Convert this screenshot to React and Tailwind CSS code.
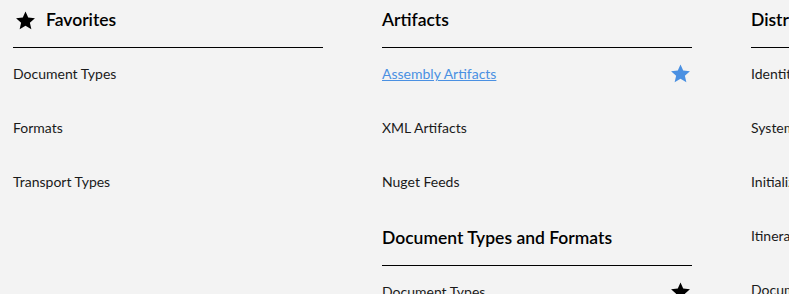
import React from "react";

const Star = ({ className }) => (
  <svg viewBox="0 0 24 24" className={className} fill="currentColor">
    <path d="M12 1.6l3.1 7.1 7.7.7-5.8 5.1 1.7 7.6L12 18.1l-6.7 4 1.7-7.6-5.8-5.1 7.7-.7z" />
  </svg>
);

const columns = [
  [
    {
      title: "Favorites",
      icon: true,
      items: [{ name: "Document Types" }, { name: "Formats" }, { name: "Transport Types" }],
    },
  ],
  [
    {
      title: "Artifacts",
      items: [
        { name: "Assembly Artifacts", link: true, star: "blue" },
        { name: "XML Artifacts" },
        { name: "Nuget Feeds" },
      ],
    },
    {
      title: "Document Types and Formats",
      items: [{ name: "Document Types", star: "black" }, { name: "Formats" }],
    },
  ],
  [
    {
      title: "Distribution",
      items: [
        { name: "Identities" },
        { name: "Systems" },
        { name: "Initialization" },
        { name: "Itineraries" },
        { name: "Documents" },
      ],
    },
  ],
];

const Section = ({ section, first }) => (
  <div className={first ? "" : "mt-2"}>
    <div className="flex items-center gap-[10px] pt-[8px] pb-[15px] border-b border-black h-[48px]">
      {section.icon && <Star className="w-[21px] h-[21px] text-black ml-[2px]" />}
      <h3 className="text-[17.5px] leading-[24px] font-semibold text-black">{section.title}</h3>
    </div>
    {section.items.map((item) => (
      <div key={item.name} className="flex items-center justify-between h-[54px] pb-[3px]">
        <span
          className={`text-[14px] ${
            item.link ? "text-[#4a90e2] underline" : "text-[#1a1a1a]"
          }`}
        >
          {item.name}
        </span>
        {item.star && (
          <Star
            className={`w-[21px] h-[21px] mr-[1px] ${
              item.star === "blue" ? "text-[#4a90e2]" : "text-black"
            }`}
          />
        )}
      </div>
    ))}
  </div>
);

export default function App() {
  return (
    <div
      className="w-[789px] h-[294px] overflow-hidden bg-[#f3f3f3]"
      style={{ fontFamily: "Lato, 'Noto Sans', sans-serif" }}
    >
      <div className="flex gap-[59px] pl-[13px]">
        {columns.map((col, i) => (
          <div key={i} className="w-[310px] shrink-0">
            {col.map((section, j) => (
              <Section key={section.title} section={section} first={j === 0} />
            ))}
          </div>
        ))}
      </div>
    </div>
  );
}
